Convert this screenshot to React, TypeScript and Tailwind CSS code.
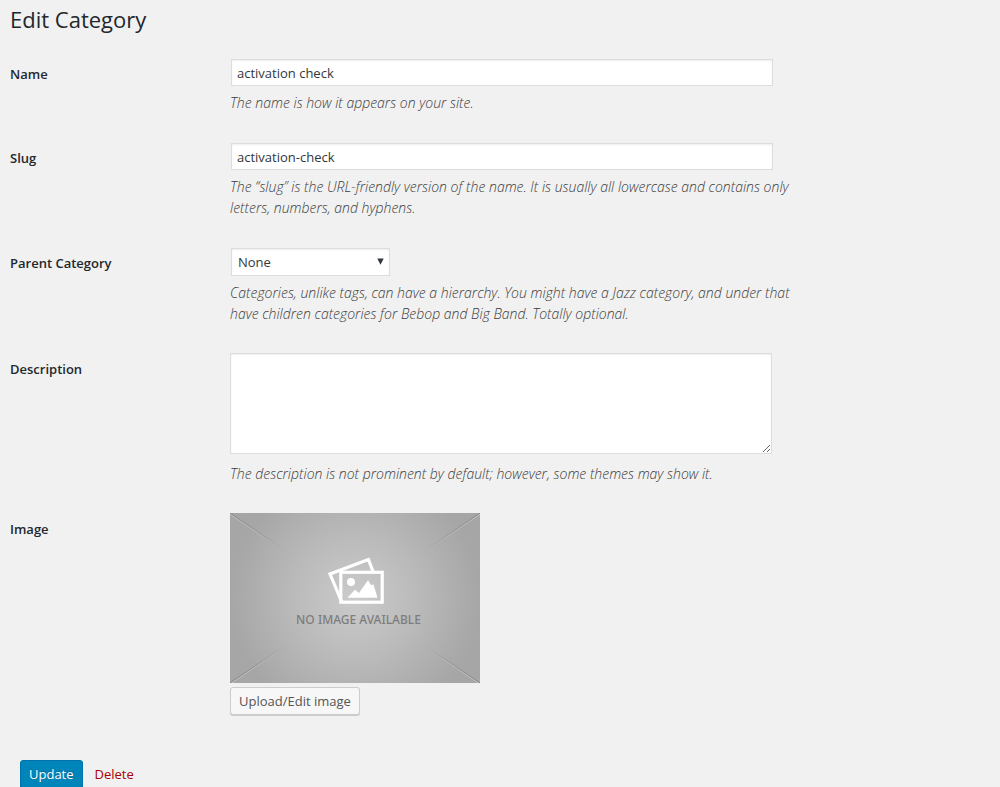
import type { ReactNode } from "react";

const fieldBox =
  "border border-[#dddddd] bg-white text-[#32373c] shadow-[inset_0_1px_2px_rgba(0,0,0,0.07)] outline-none";

type RowProps = { id: string; label: string; help?: string; children: ReactNode };

function Row({ id, label, help, children }: RowProps) {
  return (
    <div className="flex">
      <div className="w-[220px] shrink-0 pt-[6px]">
        <label htmlFor={id} className="block text-[13px] leading-[20px] font-semibold text-[#23282d]">
          {label}
        </label>
      </div>
      <div className="max-w-[580px] min-w-0 flex-1">
        {children}
        {help && <p className="mt-[6px] text-[14px] leading-[21px] font-light text-[#3c3c3c] italic">{help}</p>}
      </div>
    </div>
  );
}

function Placeholder() {
  return (
    <svg viewBox="0 0 250 170" className="block h-[170px] w-[250px]" role="img" aria-label="No image available">
      <defs>
        <radialGradient id="glow" gradientUnits="userSpaceOnUse" cx="125" cy="85" r="125">
          <stop offset="0" stopColor="#cbcbcb" />
          <stop offset="0.5" stopColor="#bababa" />
          <stop offset="1" stopColor="#a6a6a6" />
        </radialGradient>
        <radialGradient id="fade" gradientUnits="userSpaceOnUse" cx="125" cy="85" r="151">
          <stop offset="0.54" stopColor="#000" />
          <stop offset="1" stopColor="#fff" />
        </radialGradient>
        <mask id="edges" maskUnits="userSpaceOnUse" x="0" y="0" width="250" height="170">
          <rect width="250" height="170" fill="url(#fade)" />
        </mask>
      </defs>
      <rect width="250" height="170" fill="url(#glow)" />
      <g mask="url(#edges)" fill="none" strokeWidth="1">
        <path d="M0 0L125 85M250 0L125 85M0 170L125 85M250 170L125 85" stroke="#858585" />
        <path d="M0 1.2L125 86.2M250 1.2L125 86.2M0 171.2L125 86.2M250 171.2L125 86.2" stroke="#c4c4c4" />
      </g>
      <path d="M112 89.500L100 61L138.500 46.500L143 58.500" fill="none" stroke="#fff" strokeWidth="3.200" />
      <rect x="110.800" y="59.300" width="41.400" height="29.900" fill="none" stroke="#fff" strokeWidth="3.200" />
      <circle cx="121" cy="69" r="4" fill="#fff" />
      <path d="M117.500 84.800L125 76.800L129 80L138 67.300L141 72L143.500 71.500L147.500 84.800Z" fill="#fff" />
      <text
        x="128.500"
        y="110.500"
        textAnchor="middle"
        fill="#7d7d7d"
        fontFamily="'Noto Sans', sans-serif"
        fontSize="12"
        fontWeight="500"
      >
        NO IMAGE AVAILABLE
      </text>
    </svg>
  );
}

export default function App() {
  return (
    <main className="min-h-screen bg-[#f1f1f1] px-[10px] pt-[4px] font-['Open_Sans',sans-serif] text-[13px] text-[#444444]">
      <h1 className="text-[22px] leading-[30px] font-normal text-[#23282d]">Edit Category</h1>
      <form onSubmit={(e) => e.preventDefault()}>
        <div className="flex flex-col gap-[29px] pt-[24px]">
          <Row id="name" label="Name" help="The name is how it appears on your site.">
            <input id="name" type="text" defaultValue="activation check" className={`${fieldBox} mt-px ml-px block h-[27px] w-full max-w-[542px] px-[5px]`} />
          </Row>
          <Row
            id="slug"
            label="Slug"
            help="The “slug” is the URL-friendly version of the name. It is usually all lowercase and contains only letters, numbers, and hyphens."
          >
            <input id="slug" type="text" defaultValue="activation-check" className={`${fieldBox} mt-px ml-px block h-[27px] w-full max-w-[542px] px-[5px]`} />
          </Row>
          <Row
            id="parent"
            label="Parent Category"
            help="Categories, unlike tags, can have a hierarchy. You might have a Jazz category, and under that have children categories for Bebop and Big Band. Totally optional."
          >
            <div className="relative mt-px ml-px w-[159px]">
              <select id="parent" className={`${fieldBox} block h-[28px] w-full appearance-none px-[6px] pt-[2px]`}>
                <option>None</option>
              </select>
              <svg viewBox="0 0 7 7" className="pointer-events-none absolute top-[10px] right-[6px] h-[7px] w-[7px]" aria-hidden="true">
                <path d="M0.300 0.500H6.700L3.500 6.700Z" fill="#32373c" />
              </svg>
            </div>
          </Row>
          <Row
            id="description"
            label="Description"
            help="The description is not prominent by default; however, some themes may show it."
          >
            <textarea id="description" className={`${fieldBox} mb-[9px] block h-[101px] w-full max-w-[542px] resize px-[6px] py-[2px]`} />
          </Row>
          <Row id="image" label="Image">
            <Placeholder />
            <button
              id="image"
              type="button"
              className="mt-[4px] block h-[28px] rounded-[3px] border border-[#cccccc] bg-[#f7f7f7] px-[8px] text-[13px] leading-[26px] text-[#555555] shadow-[0_1px_0_#cccccc]"
            >
              Upload/Edit image
            </button>
          </Row>
        </div>
        <div className="flex items-center gap-[12px] px-[10px] pt-[45px]">
          <button
            type="submit"
            className="h-[28px] rounded-[3px] border border-[#0073aa] bg-[#0085ba] px-[8px] text-[13px] leading-[26px] text-white shadow-[0_1px_0_#006799] [text-shadow:0_-1px_1px_#006799]"
          >
            Update
          </button>
          <a href="#delete" className="text-[13px] leading-[20px] text-[#aa0000]">
            Delete
          </a>
        </div>
      </form>
    </main>
  );
}
